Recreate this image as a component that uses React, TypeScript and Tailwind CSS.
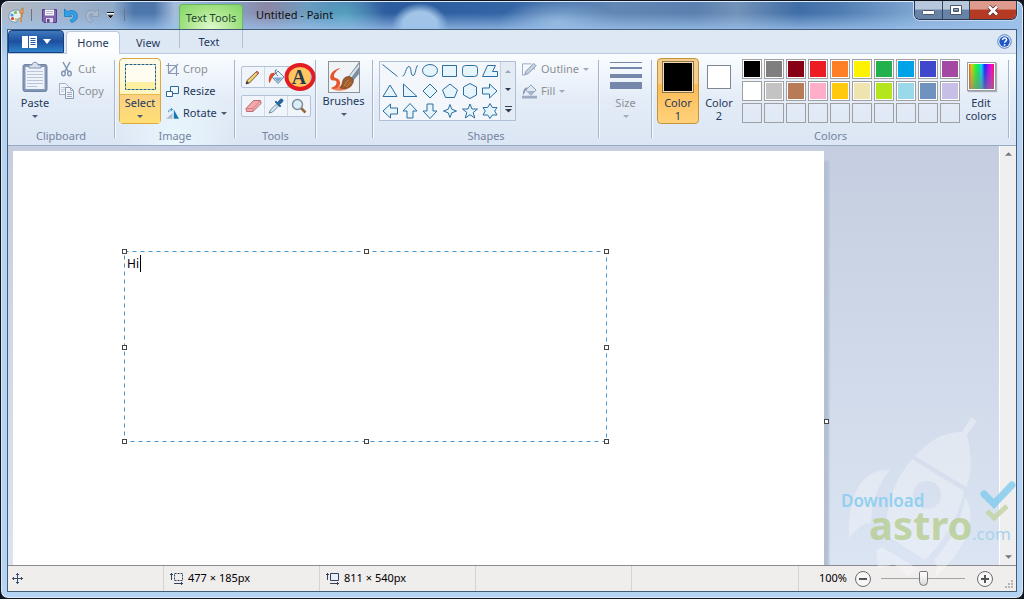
import { useState } from "react"
import type { ReactNode } from "react"

const palette = [
  ["Black", "bg-black"], ["Gray-50%", "bg-[#7f7f7f]"], ["Dark red", "bg-[#880015]"], ["Red", "bg-[#ed1c24]"], ["Orange", "bg-[#ff7f27]"],
  ["Yellow", "bg-[#fff200]"], ["Green", "bg-[#22b14c]"], ["Turquoise", "bg-[#00a2e8]"], ["Indigo", "bg-[#3f48cc]"], ["Purple", "bg-[#a349a4]"],
  ["White", "bg-white"], ["Gray-25%", "bg-[#c3c3c3]"], ["Brown", "bg-[#b97a57]"], ["Rose", "bg-[#ffaec9]"], ["Gold", "bg-[#ffc90e]"],
  ["Light yellow", "bg-[#efe4b0]"], ["Lime", "bg-[#b5e61d]"], ["Light turquoise", "bg-[#99d9ea]"], ["Blue-gray", "bg-[#7092be]"], ["Lavender", "bg-[#c8bfe7]"],
]

const shapes = [
  ["Line", "M2.5 3.5L17.5 15.5"],
  ["Curve", "M2.5 15C5 16 6 5 9 5.5C12 6 10 14.5 13 14.5C16 14.5 15.5 4.5 18 4.5"],
  ["Oval", "M2.5 9.5A7.5 6 0 1 0 17.5 9.5A7.5 6 0 1 0 2.5 9.5Z"],
  ["Rectangle", "M2.5 4.5H16.5V15.5H2.5Z"],
  ["Rounded rectangle", "M5.5 4.5H14.5Q17.5 4.5 17.5 7.5V12.5Q17.5 15.5 14.5 15.5H5.5Q2.5 15.5 2.5 12.5V7.5Q2.5 4.5 5.5 4.5Z"],
  ["Polygon", "M7.5 4.5H15.5L12.5 10.5H17.5V15.5H2.5Z"],
  ["Triangle", "M10 4L17 15.5H3Z"],
  ["Right triangle", "M3.5 3V15.5H17Z"],
  ["Diamond", "M10 3L17 10L10 17L3 10Z"],
  ["Pentagon", "M10 3L17.5 9L14.5 16.5H5.5L2.5 9Z"],
  ["Hexagon", "M10 2.5L16.5 6V14L10 17.5L3.5 14V6Z"],
  ["Right arrow", "M2.5 7H9.5V3L17 10L9.5 17V13H2.5Z"],
  ["Left arrow", "M17.5 7H10.5V3L3 10L10.5 17V13H17.5Z"],
  ["Up arrow", "M7 17V10H3L10 2.5L17 10H13V17Z"],
  ["Down arrow", "M7 3V10H3L10 17.5L17 10H13V3Z"],
  ["Four-point star", "M10 3.5L11.8 8.2L16.5 10L11.8 11.8L10 16.5L8.2 11.8L3.5 10L8.2 8.2Z"],
  ["Five-point star", "M10 3L12 8H17.5L13.2 11.5L14.8 17L10 13.7L5.2 17L6.8 11.5L2.5 8H8Z"],
  ["Six-point star", "M10 2.5L12.3 6.5H17L14.7 10L17 14H12.3L10 17.5L7.7 14H3L5.3 10L3 6.5H7.7Z"],
]

function Arrow({ className = "" }: { className?: string }) {
  return (
    <svg width="6" height="3" viewBox="0 0 6 3" className={className || "text-[#4b5a75]"} aria-hidden="true">
      <path d="M0 0H6L3 3Z" fill="currentColor" />
    </svg>
  )
}

function Separator() {
  return <div className="mt-1.5 h-[78px] w-px shrink-0 border-r border-[#f5f9fd] bg-[#a7b6cc] box-content" />
}

function Group({ label, className, children }: { label?: string, className: string, children: ReactNode }) {
  return (
    <section aria-label={label} className={`flex shrink-0 flex-col pt-1 ${className}`}>
      <div className="flex h-[66px] items-start">{children}</div>
      <div className="mt-1 text-center leading-4 text-[#74839f]">{label}</div>
    </section>
  )
}

function SmallButton({ icon, label, disabled, arrow }: { icon: ReactNode, label: string, disabled?: boolean, arrow?: boolean }) {
  return (
    <button disabled={disabled} className={`flex h-[22px] items-center gap-1 whitespace-nowrap ${disabled ? "text-[#8d8f95]" : "text-[#1e395b]"}`}>
      {icon}
      <span>{label}</span>
      {arrow && <Arrow className={disabled ? "text-[#a3abb9]" : "text-[#4b5a75]"} />}
    </button>
  )
}

function PaintLogo() {
  return (
    <svg width="17" height="17" viewBox="0 0 17 17" aria-hidden="true">
      <path d="M8 3C3.5 3 .7 6 .8 9.5C.9 13 4 15.5 8 15.2C10 15 9.5 13 9.8 12C10.3 10.5 14.5 12 14.5 8.5C14.5 5 11.5 3 8 3Z" fill="#e4f0fa" stroke="#6f93b5" />
      <circle cx="4" cy="8" r="1.6" fill="#4a9bd8" /><circle cx="7.5" cy="5.5" r="1.5" fill="#6bbf4a" />
      <circle cx="4.5" cy="11.5" r="1.5" fill="#d8432e" /><circle cx="8" cy="12.5" r="1.2" fill="#e9b52c" />
      <path d="M12.5 6V15.5H14V6Z" fill="#d88a35" />
      <path d="M11.5 6C11.5 3.5 13.5 3 14.5 .5C15.5 2.5 15.3 5 14.8 6.5Z" fill="#e9a24a" stroke="#9c602a" strokeWidth=".5" />
    </svg>
  )
}

function TitleBar() {
  return (
    <header className="flex h-7 items-start text-[#101010]">
      <div className="flex h-7 items-center pl-px">
        <PaintLogo />
        <div className="ml-1.5 h-3 w-px bg-[#64748b]" />
        <button aria-label="Save" className="ml-2.5">
          <svg width="15" height="15" viewBox="0 0 15 15">
            <path d="M.5 1.5H14.5V14.5H2L.5 13Z" fill="#8064ae" stroke="#57408a" />
            <path d="M3 1.5H12V7.5H3Z" fill="#f6f6fb" /><path d="M4 3.5H11M4 5.5H11" stroke="#b9b9cc" />
            <path d="M4 10H11V14.5H4Z" fill="#ded9ea" /><path d="M5 11H7.5V14.5H5Z" fill="#57408a" />
          </svg>
        </button>
        <button aria-label="Undo" className="ml-[7px]">
          <svg width="14" height="15" viewBox="0 0 14 15">
            <path d="M.5 1V8.5H8L5.8 6.2C8 5 10 6.2 9.8 8.5C9.7 10.5 8 11.5 6 12L7.5 14.5C11 13.8 13.3 11.5 13.4 8.2C13.5 3 8 .8 3.5 3.8Z" fill="#2fa3ea" stroke="#1676bd" strokeWidth=".7" />
          </svg>
        </button>
        <button aria-label="Redo" className="ml-[7px]" disabled>
          <svg width="14" height="15" viewBox="0 0 14 15">
            <path d="M13.5 1V8.5H6L8.2 6.2C6 5 4 6.2 4.2 8.5C4.3 10.5 6 11.5 8 12L6.5 14.5C3 13.8 .7 11.5 .6 8.2C.5 3 6 .8 10.5 3.8Z" fill="#a9b9cd" stroke="#8295b0" strokeWidth=".7" />
          </svg>
        </button>
        <button aria-label="Customize Quick Access Toolbar" className="ml-[7px]">
          <svg width="9" height="7" viewBox="0 0 9 7"><path d="M1 1H8" stroke="#fff" strokeWidth="2" /><path d="M1 .5H8" stroke="#111" /><path d="M1 3H8L4.5 6.5Z" fill="#111" stroke="#fff" strokeWidth=".4" /></svg>
        </button>
        <div className="ml-[9px] h-3 w-px bg-[#64748b]" />
      </div>
      <div className="ml-[54px] mt-[3px] h-[25px] w-16 whitespace-nowrap rounded-t-sm border border-b-0 border-[#6cb85d] bg-[radial-gradient(ellipse_at_bottom,#e3fbd0,#a5e386_60%,#83d568)] text-center leading-[25px] text-[#1e4a2c]">Text Tools</div>
      <h1 className="ml-3 pl-px leading-7">Untitled - Paint</h1>
      <div className="ml-auto flex h-[19px] overflow-hidden rounded-b-md border border-t-0 border-[#28384f] shadow-[0_0_0_1px_#c5daf0]">
        <button aria-label="Minimize" className="flex w-7 items-center justify-center border-r border-[#33455f] bg-linear-to-b from-[#b8c8dc] from-45% to-[#6784a8] to-50%">
          <svg width="13" height="11"><rect x=".5" y="5.5" width="12" height="4" rx="1" fill="#fff" stroke="#4c5666" /></svg>
        </button>
        <button aria-label="Maximize" className="flex w-[27px] items-center justify-center border-r border-[#33455f] bg-linear-to-b from-[#b8c8dc] from-45% to-[#6784a8] to-50%">
          <svg width="12" height="10"><path fillRule="evenodd" d="M.5 .5H11.5V9.5H.5ZM3.5 3.5H8.5V6.5H3.5Z" fill="#fff" stroke="#4c5666" /></svg>
        </button>
        <button aria-label="Close" className="flex w-[46px] items-center justify-center bg-linear-to-b from-[#dd9a8d] from-45% to-[#b43a24] to-50%">
          <svg width="12" height="11"><path d="M2 1.5L10 9.5M10 1.5L2 9.5" stroke="#533" strokeWidth="4.2" /><path d="M2 1.5L10 9.5M10 1.5L2 9.5" stroke="#fff" strokeWidth="2.6" /></svg>
        </button>
      </div>
    </header>
  )
}

function TabRow() {
  return (
    <nav className="flex h-6 items-end border-b border-[#bccbe0] bg-[#dee8f4] text-[#1e395b]">
      <button aria-label="Paint menu" className="flex h-[23px] w-14 items-center justify-center gap-1.5 rounded-t-sm border border-[#173f7d] bg-linear-to-b from-[#3f79bd] via-[#1d4f9e] via-50% to-[#2f83cc]">
        <svg width="15" height="12" viewBox="0 0 15 12">
          <path d="M0 0H15V12H0Z" fill="#fff" /><path d="M6.5 0V12" stroke="#2a5ba6" /><path d="M8.5 2.5H13.5M8.5 4.5H13.5M8.5 6.5H13.5M8.5 8.5H13.5" stroke="#2a5ba6" />
        </svg>
        <svg width="8" height="5"><path d="M0 0H8L4 5Z" fill="#fff" /></svg>
      </button>
      <button className="-mb-px ml-0.5 h-[23px] w-[54px] rounded-t-sm border border-b-0 border-[#bac9de] bg-[#fbfdff]">Home</button>
      <button className="h-5 w-14">View</button>
      <div className="ml-[3px] h-full w-16 bg-linear-to-b from-[#b0bfd5] from-80% to-transparent to-80% px-px">
        <button className="h-full w-full bg-[#dee8f4] pr-1 pt-0.5">Text</button>
      </div>
      <button aria-label="Help" className="mb-1 ml-auto mr-1">
        <svg width="15" height="15" viewBox="0 0 15 15">
          <circle cx="7.5" cy="7.5" r="6.8" fill="#e6effb" stroke="#5b82b8" /><circle cx="7.5" cy="7.5" r="5.2" fill="#2257c7" />
          <path d="M5.5 6C5.5 3.3 9.8 3.5 9.5 6C9.4 7.2 7.7 7.3 7.6 8.8" fill="none" stroke="#fff" strokeWidth="1.5" /><circle cx="7.6" cy="10.8" r=".9" fill="#fff" />
        </svg>
      </button>
    </nav>
  )
}

function Clipboard() {
  return (
    <Group label="Clipboard" className="w-[106px]">
      <button className="ml-[9px] flex w-9 flex-col items-center pt-[3px] text-[#1e395b]">
        <svg width="26" height="32" viewBox="0 0 26 32">
          <rect x="1" y="3.5" width="24" height="27" rx="2" fill="#8496b5" stroke="#7183a3" />
          <rect x="3.5" y="6" width="19" height="22" fill="#eef3fa" />
          <path d="M5 10.5H21M5 13.5H21M5 16.5H21M5 19.5H21M5 22.5H21M5 25.5H15" stroke="#b9c5d8" />
          <path d="M7 7V4H10C10 .3 16 .3 16 4H19V7Z" fill="#d7e0ec" stroke="#8293ae" />
        </svg>
        <span className="mt-0.5 leading-4">Paste</span>
        <Arrow className="mt-1 text-[#4b5a75]" />
      </button>
      <div className="ml-1.5">
        <SmallButton disabled label="Cut" icon={
          <svg width="15" height="16" viewBox="0 0 15 16" className="text-[#8294b2]">
            <path d="M4 1L9.5 11M11 1L5.5 11" stroke="currentColor" strokeWidth="1.5" />
            <ellipse cx="4.5" cy="12.5" rx="1.8" ry="2.3" fill="none" stroke="currentColor" strokeWidth="1.4" /><ellipse cx="10.5" cy="12.5" rx="1.8" ry="2.3" fill="none" stroke="currentColor" strokeWidth="1.4" />
          </svg>} />
        <SmallButton disabled label="Copy" icon={
          <svg width="15" height="16" viewBox="0 0 15 16">
            <path d="M.5 .5H6.5L9.5 3.5V11.5H.5Z" fill="#f2f6fb" stroke="#a1aec4" /><path d="M2 4.5H7M2 6.5H7M2 8.5H5" stroke="#bec9da" />
            <path d="M6.5 4.5H11.5L14.5 7.5V15.5H6.5Z" fill="#f2f6fb" stroke="#8a9ab5" /><path d="M11.5 4.5V7.5H14.5M8 9.5H13M8 11.5H13M8 13.5H13" fill="none" stroke="#9baac2" />
          </svg>} />
      </div>
    </Group>
  )
}

function ImageGroup() {
  return (
    <Group label="Image" className="w-[118px] bg-[radial-gradient(ellipse_at_bottom,#eaf7fd,transparent_70%)]">
      <button className="ml-[3px] flex h-[66px] w-[42px] shrink-0 flex-col items-center rounded-sm border border-[#dda93c] bg-linear-to-b from-[#fdfaea] to-[#fff09a] text-[#1e395b]">
        <span className="flex h-9 w-full items-center justify-center border-b border-[#e6b94d]">
          <svg width="31" height="26" viewBox="0 0 31 26">
            <rect x=".5" y=".5" width="30" height="25" fill="#fffdf0" /><path d="M1 18H30V25H1Z" fill="#fdf0a0" />
            <rect x=".5" y=".5" width="30" height="25" fill="none" stroke="#205f83" strokeDasharray="3 1" />
          </svg>
        </span>
        <span className="flex w-full flex-1 flex-col items-center bg-linear-to-b from-[#fbd184] to-[#ffdf75]">
          <span className="leading-4">Select</span>
          <Arrow className="mt-1 text-[#4b5a75]" />
        </span>
      </button>
      <div className="ml-[5px]">
        <SmallButton disabled label="Crop" icon={
          <svg width="13" height="13" viewBox="0 0 13 13"><path d="M2.5 0V10.5H13M0 2.5H10.5V13M3 10L12 1" fill="none" stroke="#8a98b0" strokeWidth="1.2" /></svg>} />
        <SmallButton label="Resize" icon={
          <svg width="13" height="13" viewBox="0 0 13 13"><path d="M4.5 1.5H12.5V8.5H4.5Z" fill="#eff7fc" stroke="#2b6a99" /><path d="M.5 6.5H6.5V11.5H.5Z" fill="#fff" stroke="#2b6a99" /></svg>} />
        <SmallButton label="Rotate" arrow icon={
          <svg width="13" height="13" viewBox="0 0 15 13"><path d="M0 12.5L7.5 6V12.5Z" fill="#b5bdc7" /><path d="M9 2L15 12.5H9Z" fill="#1779b5" /><path d="M3 5C3 2 5 1.5 7 2M5.5 0L7.5 2L5.5 4" fill="none" stroke="#2280bd" /></svg>} />
      </div>
    </Group>
  )
}

const toolCell = "flex flex-1 items-center justify-center border-r border-[#cfd9e7] last:border-r-0"
const toolRow = "flex h-[22px] w-[70px] rounded-xs border border-[#b4c2d6] bg-[#f0f5fb]"

function Tools() {
  return (
    <Group label="Tools" className="w-[79px]">
      <div className="ml-[5px] flex flex-col gap-[7px] pt-2">
        <div className={toolRow}>
          <button aria-label="Pencil" className={toolCell}>
            <svg width="16" height="16" viewBox="0 0 16 16"><path d="M1 15L2 11.5L12 2L14 4L4.5 14Z" fill="#f3cd72" stroke="#665037" strokeWidth=".9" /><path d="M10.5 3.5L12.5 5.5L14 4L12 2Z" fill="#d37b70" /><path d="M1 15L2 12L4 14Z" fill="#333" /></svg>
          </button>
          <button aria-label="Fill with color" className={toolCell}>
            <svg width="17" height="16" viewBox="0 0 17 16"><path d="M4 8L10 2L16 8L10 14.5Z" fill="#e6f0f9" stroke="#5c7592" strokeWidth=".9" /><path d="M5.5 8.5L14.5 8.5L10 13Z" fill="#7aa6cf" /><path d="M9 1C6 0 7 5 10 7" fill="none" stroke="#5c7592" /><path d="M7 4C3 3 0 6 1 14C3.500 13 3 8 6 6Z" fill="#de4b26" /></svg>
          </button>
          <button aria-label="Text" className={`${toolCell} relative bg-[#ffc65f] font-['Liberation_Serif',serif] text-xl font-bold leading-none text-[#243a50]`}>
            A
            <svg width="32" height="30" viewBox="0 0 32 30" className="absolute -left-1 -top-[5px]">
              <ellipse cx="16" cy="15" rx="13.5" ry="12" fill="none" stroke="#e31b23" strokeWidth="4" />
            </svg>
          </button>
        </div>
        <div className={toolRow}>
          <button aria-label="Eraser" className={toolCell}>
            <svg width="17" height="14" viewBox="0 0 17 14"><path d="M1 9.5L8.500 1.5H15.5L16 4.5L8 12.5H1.500Z" fill="#f3a9ab" stroke="#b95f66" strokeWidth=".9" /><path d="M1 9.5H8L15.5 1.5M8 9.5V12.5" fill="none" stroke="#c9777c" strokeWidth=".8" /></svg>
          </button>
          <button aria-label="Color picker" className={toolCell}>
            <svg width="16" height="16" viewBox="0 0 16 16"><path d="M1 15L2.5 12L8 6.5L10 8.5L4.5 14Z" fill="#dcecf7" stroke="#6c8aa3" /><path d="M7 4L12 9L13 8L11.5 6.5L14.5 4C16 2 14 0 12 1.5L9.5 4.5L8 3Z" fill="#2467a8" stroke="#174878" strokeWidth=".6" /></svg>
          </button>
          <button aria-label="Magnifier" className={toolCell}>
            <svg width="16" height="16" viewBox="0 0 16 16"><path d="M10 10L14.5 14.5" stroke="#94693c" strokeWidth="2.5" /><circle cx="6.5" cy="6.5" r="5" fill="#dceefa" stroke="#7f8d9b" strokeWidth="1.5" /></svg>
          </button>
        </div>
      </div>
    </Group>
  )
}

function Brushes() {
  return (
    <Group className="w-[55px]">
      <button className="flex w-full flex-col items-center pr-0.5 pt-[3px] text-[#1e395b]">
        <svg width="32" height="32" viewBox="0 0 32 32">
          <rect x=".5" y=".5" width="31" height="31" fill="#f0f3f6" stroke="#8d9299" />
          <path d="M3 27C7 31 17 31 24 25L17 21C14 24 9 27 3 27Z" fill="#f08262" />
          <path d="M13 7C6 8 1 13 2.5 18C4 21 8 18 8.5 21C9 24 6 26 3 27C7 29 13 26 12 21C11 16 6 18 6 15C6 12 9 9 13 7Z" fill="#e6532c" />
          <path d="M20 16L31 1V13L25 20Z" fill="#7c8ea3" /><path d="M21.500 15L31 3V6L23 17Z" fill="#dce4ec" />
          <path d="M12 27C15 25 13 20 17 16.5C21 14 27 17 25 22C22 28 16 28 12 27Z" fill="#9c5c2d" stroke="#6c3c1d" strokeWidth=".6" />
          <path d="M16 25C18 23 18 20 21 19M18 26C21 24 21 22 23 21" fill="none" stroke="#c98a55" />
        </svg>
        <span className="leading-4">Brushes</span>
        <Arrow className="mt-1 text-[#4b5a75]" />
      </button>
    </Group>
  )
}

function Shapes() {
  return (
    <Group label="Shapes" className="w-[224px]">
      <div className="ml-[5px] mt-[3px] flex h-[60px] w-[137px] border border-[#afbfd5] bg-[#f3f7fc]">
        <div className="grid w-[120px] grid-cols-6 content-center">
          {shapes.map(([name, d], i) => (
            <button key={name} aria-label={name} className="h-5">
              <svg width="20" height="20" viewBox="0 0 20 20">
                <path d={d} fill={i < 2 ? "none" : "#e6f4fb"} stroke="#2c6ea0" />
              </svg>
            </button>
          ))}
        </div>
        <div className="flex flex-1 flex-col items-center justify-around border-l border-[#c4d0e1] bg-[#e3ebf5]">
          <button aria-label="Previous shapes"><Arrow className="rotate-180 text-[#9aa6b8]" /></button>
          <button aria-label="Next shapes"><Arrow className="text-[#2e3b50]" /></button>
          <button aria-label="More shapes"><svg width="7" height="7"><path d="M0 .5H7" stroke="#2e3b50" /><path d="M0 3H7L3.5 6.5Z" fill="#2e3b50" /></svg></button>
        </div>
      </div>
      <div className="ml-1.5">
        <SmallButton disabled arrow label="Outline" icon={
          <svg width="15" height="14" viewBox="0 0 16 14"><path d="M10 1.5H.5V13.5H3M13 5V8" fill="none" stroke="#99a8bf" /><path d="M3 13L4 9.5L12.5 1L15 3.5L6.5 12Z" fill="#c8d2df" stroke="#8294b0" /></svg>} />
        <SmallButton disabled arrow label="Fill" icon={
          <svg width="15" height="16" viewBox="0 0 16 16"><path d="M0 13H16V16H0Z" fill="#9eacc2" /><path d="M4 7L9.5 1.5L15 7L9.5 12.5Z" fill="#e0e8f2" stroke="#8596b1" /><path d="M6 8H13.5L9.5 11.5Z" fill="#a1b0c6" /><path d="M6 4C2 4 1 8 1 12C4 10 3 7 5 6Z" fill="#8c9bb3" /></svg>} />
      </div>
    </Group>
  )
}

function Size() {
  return (
    <Group className="w-[51px]">
      <button disabled className="flex w-full flex-col items-center pt-1 text-[#8d8f95]">
        <svg width="32" height="31"><path d="M0 0H32V1H0ZM0 5H32V7H0ZM0 12H32V16H0ZM0 20H32V27H0Z" fill="#7587ab" /></svg>
        <span className="mt-0.5 leading-4">Size</span>
        <Arrow className="mt-1 text-[#a3abb9]" />
      </button>
    </Group>
  )
}

function Colors() {
  return (
    <Group label="Colors" className="w-[355px]">
      <button className="ml-1 flex h-[66px] w-[42px] flex-col items-center rounded-sm border border-[#c39538] bg-linear-to-b from-[#f6cd8c] from-38% via-[#fdbb54] via-40% to-[#ffd27c] pt-0.5 text-[#1e395b]">
        <span className="h-8 w-8 border border-[#8e764c] bg-black shadow-[inset_0_0_0_1px_#f5deb3]" />
        <span className="mt-[3px] leading-[13px]">Color<br />1</span>
      </button>
      <button className="flex h-[66px] w-10 flex-col items-center pt-[7px] text-[#1e395b]">
        <span className="h-6 w-6 border border-[#7f8790] bg-white" />
        <span className="mt-[7px] leading-[13px]">Color<br />2</span>
      </button>
      <div className="ml-[3px] grid grid-cols-10 gap-0.5 pt-px">
        {palette.map(([name, color]) => (
          <button key={name} aria-label={name} className={`h-5 w-5 border border-[#a0a0a3] shadow-[inset_0_0_0_1px_white] ${color}`} />
        ))}
        {Array.from({ length: 10 }, (_, i) => (
          <button key={i} aria-label={`Custom color ${i + 1}`} className="h-5 w-5 border border-[#a0a0a3]" />
        ))}
      </div>
      <button className="ml-[3px] flex w-9 flex-col items-center pt-1 text-[#1e395b]">
        <span className="h-[29px] w-[29px] border border-[#9a9ca2] bg-[linear-gradient(to_top,#808080b0,transparent),linear-gradient(to_right,#d44000,#ffbd20,#42ff10,#00f068,#00dbff,#1020ff,#b000ff,#ff00c8,#ff1040)] shadow-[inset_0_0_0_1px_white,1px_1px_1px_#a9b0bc]" />
        <span className="mt-[5px] leading-[13px]">Edit<br />colors</span>
      </button>
    </Group>
  )
}

const handles = [
  "-left-0.5 -top-0.5", "left-1/2 -ml-0.5 -top-0.5", "-right-0.5 -top-0.5",
  "-left-0.5 top-1/2 -mt-0.5", "-right-0.5 top-1/2 -mt-0.5",
  "-left-0.5 -bottom-0.5", "left-1/2 -ml-0.5 -bottom-0.5", "-right-0.5 -bottom-0.5",
]

function Workspace() {
  const [text, setText] = useState("Hi")
  return (
    <main className="flex min-h-0 flex-1 bg-linear-to-b from-[#c4cee0] to-[#dbe4f2]">
      <div className="min-w-0 flex-1 overflow-hidden pl-[5px] pt-[5px]">
        <div className="relative h-[540px] w-[811px] bg-white shadow-[6px_9px_2px_-1px_#b3bfd2]">
          <div className="absolute left-[111px] top-[100px] h-[191px] w-[483px]">
            <svg className="absolute inset-0 h-full w-full" aria-hidden="true">
              <rect x=".5" y=".5" width="482" height="190" fill="none" stroke="#4a94cf" strokeDasharray="4 4" />
            </svg>
            <textarea aria-label="Text on canvas" value={text} onChange={e => setText(e.target.value)} spellCheck={false}
              className="absolute inset-0 resize-none bg-transparent px-[3px] py-1 text-xs leading-[18px] text-black caret-transparent outline-none" />
            <span className="absolute left-4 top-1 h-[17px] w-px bg-black" />
            {handles.map(place => <span key={place} className={`absolute h-[5px] w-[5px] border border-[#454545] bg-white ${place}`} />)}
          </div>
          <span className="absolute -right-[5px] top-[268px] h-[5px] w-[5px] border border-[#454545] bg-white" />
        </div>
      </div>
      <div className="flex w-[17px] flex-col items-center justify-between border-l border-white bg-[#efeff0] py-1.5">
        <button aria-label="Scroll up"><Arrow className="h-1 w-[7px] rotate-180 text-[#777]" /></button>
        <button aria-label="Scroll down"><Arrow className="h-1 w-[7px] text-[#777]" /></button>
      </div>
    </main>
  )
}

const statusCell = "flex w-[156px] items-center gap-1 border-r border-[#d5d3d3] pl-1.5"

function StatusBar() {
  const [zoom, setZoom] = useState(50)
  return (
    <footer className="flex h-[26px] items-stretch border-t border-[#8c8c90] bg-[#f0eded] text-black">
      <div className="flex w-[156px] items-center border-r border-[#d5d3d3] pl-1">
        <svg width="11" height="11" viewBox="0 0 11 11"><path d="M5.5 0V11M0 5.5H11M4 1.5H7M4 9.5H7M1.5 4V7M9.5 4V7" stroke="#3c4b67" /></svg>
      </div>
      <div className={statusCell}>
        <svg width="14" height="13" viewBox="0 0 14 13"><path d="M1.5 1V8M0 2.5H3M4 11.5H13M11.5 10V13" stroke="#33415c" /><path d="M4.5 1.5H12.5V8.5H4.5Z" fill="none" stroke="#33415c" strokeDasharray="2 1" /></svg>
        <span>477 × 185px</span>
      </div>
      <div className={statusCell}>
        <svg width="14" height="13" viewBox="0 0 14 13"><path d="M1.5 1V8M0 2.5H3M4 11.5H13M11.5 10V13" stroke="#33415c" /><path d="M4.5 1.5H12.5V8.5H4.5Z" fill="#e6eef8" stroke="#33415c" /></svg>
        <span>811 × 540px</span>
      </div>
      <div className={statusCell} />
      <div className="flex-1" />
      <div className="flex items-center border-l border-[#d5d3d3] pl-5">
        <label htmlFor="zoom">100%</label>
        <button aria-label="Zoom out" className="ml-2">
          <svg width="16" height="16"><circle cx="8" cy="8" r="7.5" fill="#f7f7f7" stroke="#6d6d6d" /><path d="M4 8H12" stroke="#555" strokeWidth="2" /></svg>
        </button>
        <input id="zoom" type="range" value={zoom} onChange={e => setZoom(Number(e.target.value))}
          className="ml-2.5 h-4 w-[84px] appearance-none bg-[linear-gradient(#a3a3a3,#a3a3a3)] bg-[length:100%_1px] bg-center bg-no-repeat [&::-webkit-slider-thumb]:h-[15px] [&::-webkit-slider-thumb]:w-[9px] [&::-webkit-slider-thumb]:appearance-none [&::-webkit-slider-thumb]:rounded-b-[5px] [&::-webkit-slider-thumb]:rounded-t-xs [&::-webkit-slider-thumb]:border [&::-webkit-slider-thumb]:border-[#777] [&::-webkit-slider-thumb]:bg-linear-to-b [&::-webkit-slider-thumb]:from-white [&::-webkit-slider-thumb]:to-[#dadada]" />
        <button aria-label="Zoom in" className="ml-3">
          <svg width="16" height="16"><circle cx="8" cy="8" r="7.5" fill="#f7f7f7" stroke="#6d6d6d" /><path d="M4 8H12M8 4V12" stroke="#555" strokeWidth="2" /></svg>
        </button>
        <svg width="9" height="9" className="ml-3 mr-0.5 mt-3"><path d="M6 0H8V2H6ZM6 3H8V5H6ZM3 3H5V5H3ZM6 6H8V8H6ZM3 6H5V8H3ZM0 6H2V8H0Z" fill="#b5b5b5" /></svg>
      </div>
    </footer>
  )
}

function Watermark() {
  return (
    <svg width="180" height="165" viewBox="0 0 180 165" className="pointer-events-none absolute bottom-[18px] right-[5px]">
      <g fill="#fff" opacity=".32">
        <path d="M133 2L139 6L129 20C135 43 133 65 128 72L77 41C91 25 108 16 124 17Z" />
        <path fillRule="evenodd" d="M74 44L126 76C120 105 104 128 87 145L48 120C47 91 57 64 74 44ZM89 66A14 14 0 1 0 89 94A14 14 0 1 0 89 66Z" />
        <path d="M52 55C23 53 9 82 11 124C18 112 27 108 33 108C34 86 41 67 52 55Z" />
        <path d="M127 83C142 104 125 139 95 164C101 153 99 149 96 145C113 127 123 106 127 83Z" />
        <path d="M38 135L44 132L80 154L70 162L56 149L40 154Z" />
      </g>
      <g fontFamily="Noto Sans, sans-serif">
        <text x="3" y="92" fontSize="17" fontWeight="600" fill="#93d0ef">Download</text>
        <text x="31" y="125" fontSize="40" fontWeight="700" fill="#b9cf98" opacity=".85">astro</text>
        <text x="134" y="125" fontSize="17" fill="#a9d3ea">.com</text>
      </g>
      <path d="M146 79L156 89L174 70" fill="none" stroke="#86cbed" strokeWidth="7" strokeLinecap="round" opacity=".85" />
      <path d="M149 96L156 103L169 91" fill="none" stroke="#c3d5a4" strokeWidth="5" opacity=".85" />
    </svg>
  )
}

export default function App() {
  return (
    <div className="h-screen overflow-hidden bg-[#10151d] font-['Noto_Sans',sans-serif] text-[11px]">
      <div className="relative flex h-full flex-col overflow-hidden rounded-lg border border-[#10151d] bg-[linear-gradient(to_bottom,transparent_12px,#9cc2ecd0_29px,#b5d3f3_60px),radial-gradient(28px_22px_at_41%_24px,#a3c4e6_60%,transparent),radial-gradient(60px_24px_at_54.5%_22px,#8fb4da,transparent),radial-gradient(40px_26px_at_33.5%_16px,#55a3bf,transparent),linear-gradient(to_right,#b5bac2,#a3b3c8_5%,#8fa9c8_11%,#4d76ab_13%,#4d76ab_15%,#a4bddb_17%,#86a6d0_22%,#8b86a4_26%,#6b9dc0_30%,#3b6aa8_36%,#2c5c9e_38%,#3465a5_50%,#6287b4_60%,#5a80b0_68%,#7292b8_72%,#3f6da6_78%,#4f7cb1_82%,#83a9d4_90%,#9cc1e8)] px-1.5 pb-1.5 shadow-[inset_0_0_0_1px_#dceafa]">
        <TitleBar />
        <div className="flex min-h-0 flex-1 flex-col border border-[#425d75]">
          <TabRow />
          <div className="flex h-[92px] shrink-0 overflow-hidden border-b border-[#98aac3] bg-linear-to-b from-[#fafdff] via-[#e3ecf7] via-50% to-[#dce6f4]">
            <Clipboard />
            <Separator />
            <ImageGroup />
            <Separator />
            <Tools />
            <Separator />
            <Brushes />
            <Separator />
            <Shapes />
            <Separator />
            <Size />
            <Separator />
            <Colors />
            <Separator />
          </div>
          <Workspace />
          <StatusBar />
        </div>
        <Watermark />
      </div>
    </div>
  )
}
